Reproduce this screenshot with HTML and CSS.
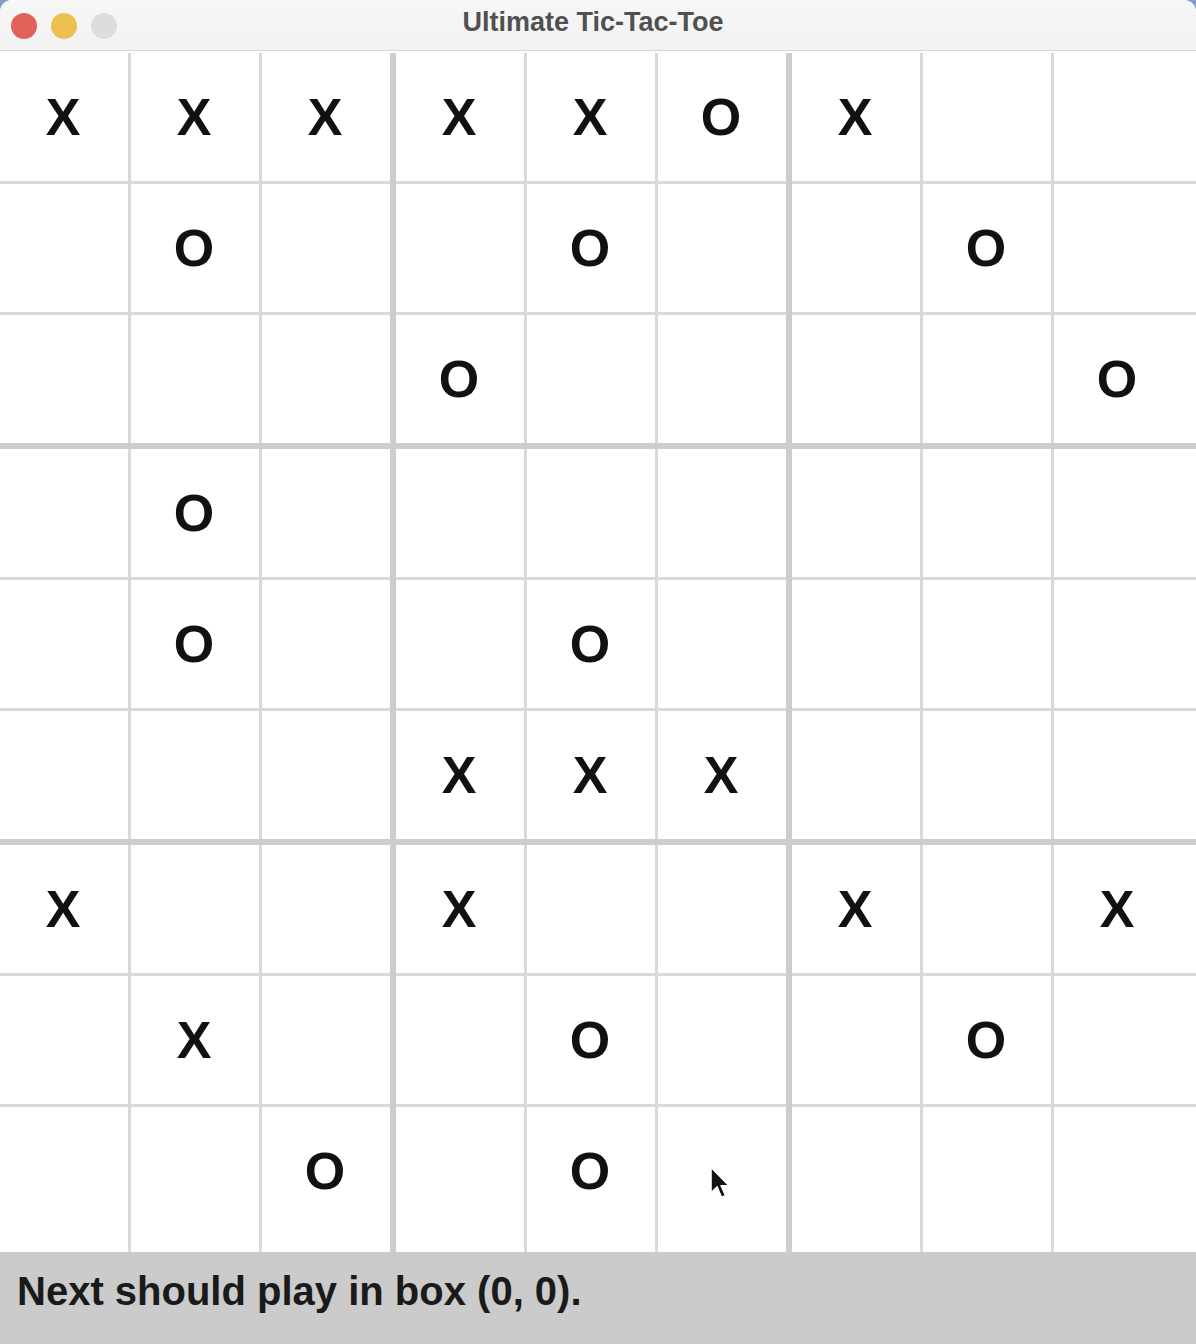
FILE: index.html
```html
<!DOCTYPE html>
<html>
<head>
<meta charset="utf-8">
<title>Ultimate Tic-Tac-Toe</title>
<link rel="stylesheet" href="styles.css">
</head>
<body>
<div class="window">
  <div class="titlebar">
    <div class="lights">
      <span class="light red"></span>
      <span class="light yellow"></span>
      <span class="light gray"></span>
    </div>
    <div class="title">Ultimate Tic-Tac-Toe</div>
  </div>
  <div class="main">
    <div class="board" id="board"></div>
  </div>
  <div class="status">Next should play in box (0, 0).</div>
  <svg class="cursor" width="22" height="36" viewBox="0 0 20 32">
    <path d="M1 1 L1 24 L6.5 18.5 L10.5 28 L14 26.5 L10 17.5 L17 17.5 Z" fill="#111" stroke="#fff" stroke-width="1.2" stroke-linejoin="round"/>
  </svg>
</div>
<script src="script.js"></script>
</body>
</html>
```
FILE: script.js
```js
var rows = [
  "XXXXXOX..",
  ".O..O..O.",
  "...O....O",
  ".O.......",
  ".O..O....",
  "...XXX...",
  "X..X..X.X",
  ".X..O..O.",
  "..O.O...."
];
var board = document.getElementById("board");
for (var br = 0; br < 3; br++) {
  for (var bc = 0; bc < 3; bc++) {
    var box = document.createElement("div");
    box.className = "box";
    for (var r = 0; r < 3; r++) {
      for (var c = 0; c < 3; c++) {
        var ch = rows[br * 3 + r].charAt(bc * 3 + c);
        var cell = document.createElement("div");
        cell.className = "cell";
        var mark = document.createElement("span");
        mark.className = "mark";
        mark.textContent = ch === "." ? "" : ch;
        cell.appendChild(mark);
        box.appendChild(cell);
      }
    }
    board.appendChild(box);
  }
}
```
FILE: styles.css
```css
html {
  background: #7f9cc9;
}
body {
  margin: 0;
  width: 1196px;
  height: 1344px;
  overflow: hidden;
}
.window {
  position: relative;
  width: 1196px;
  height: 1344px;
  display: flex;
  flex-direction: column;
  background: #ffffff;
  border-radius: 12px 12px 0 0;
  overflow: hidden;
}
.titlebar {
  height: 50px;
  flex: 0 0 50px;
  border-bottom: 1px solid #d6d6d6;
  background: linear-gradient(#f7f7f7, #f2f2f2);
  display: flex;
  align-items: center;
  position: relative;
}
.lights {
  display: flex;
  gap: 14px;
  padding-left: 11px;
  margin-top: 2px;
}
.light {
  width: 26px;
  height: 26px;
  border-radius: 50%;
  display: block;
}
.red { background: #e0625b; }
.yellow { background: #ecc04e; }
.gray { background: #dddddd; }
.title {
  position: absolute;
  left: 0;
  right: 0;
  top: 8px;
  text-align: center;
  font-family: "Liberation Sans", Arial, sans-serif;
  font-weight: bold;
  font-size: 27px;
  line-height: 28px;
  color: #505050;
  margin-left: -10px;
}
.main {
  flex: 1 1 auto;
  display: flex;
  flex-direction: column;
  padding-top: 2px;
  background: #ffffff;
}
.board {
  flex: 1 1 auto;
  display: grid;
  grid-template-columns: 390px 390px 1fr;
  grid-template-rows: 390px 390px 1fr;
  gap: 6px;
  background: #cdcdcd;
}
.box {
  display: grid;
  grid-template-columns: 128px 128px 1fr;
  grid-template-rows: 128px 128px 1fr;
  gap: 3px;
  background: #d9d9d9;
}
.cell {
  background: #ffffff;
  display: flex;
  align-items: flex-start;
  justify-content: flex-start;
}
.mark {
  width: 126px;
  height: 128px;
  display: flex;
  align-items: center;
  justify-content: center;
  font-family: "Liberation Sans", Arial, sans-serif;
  font-weight: bold;
  font-size: 52px;
  line-height: 1;
  color: #111111;
}
.status {
  flex: 0 0 92px;
  height: 92px;
  box-sizing: border-box;
  background: #cbcbcb;
  padding: 19px 0 0 17px;
  font-family: "Liberation Sans", Arial, sans-serif;
  font-weight: bold;
  font-size: 40px;
  line-height: 40px;
  color: #1a1a1a;
}
.cursor {
  position: absolute;
  left: 710px;
  top: 1166px;
}
```
